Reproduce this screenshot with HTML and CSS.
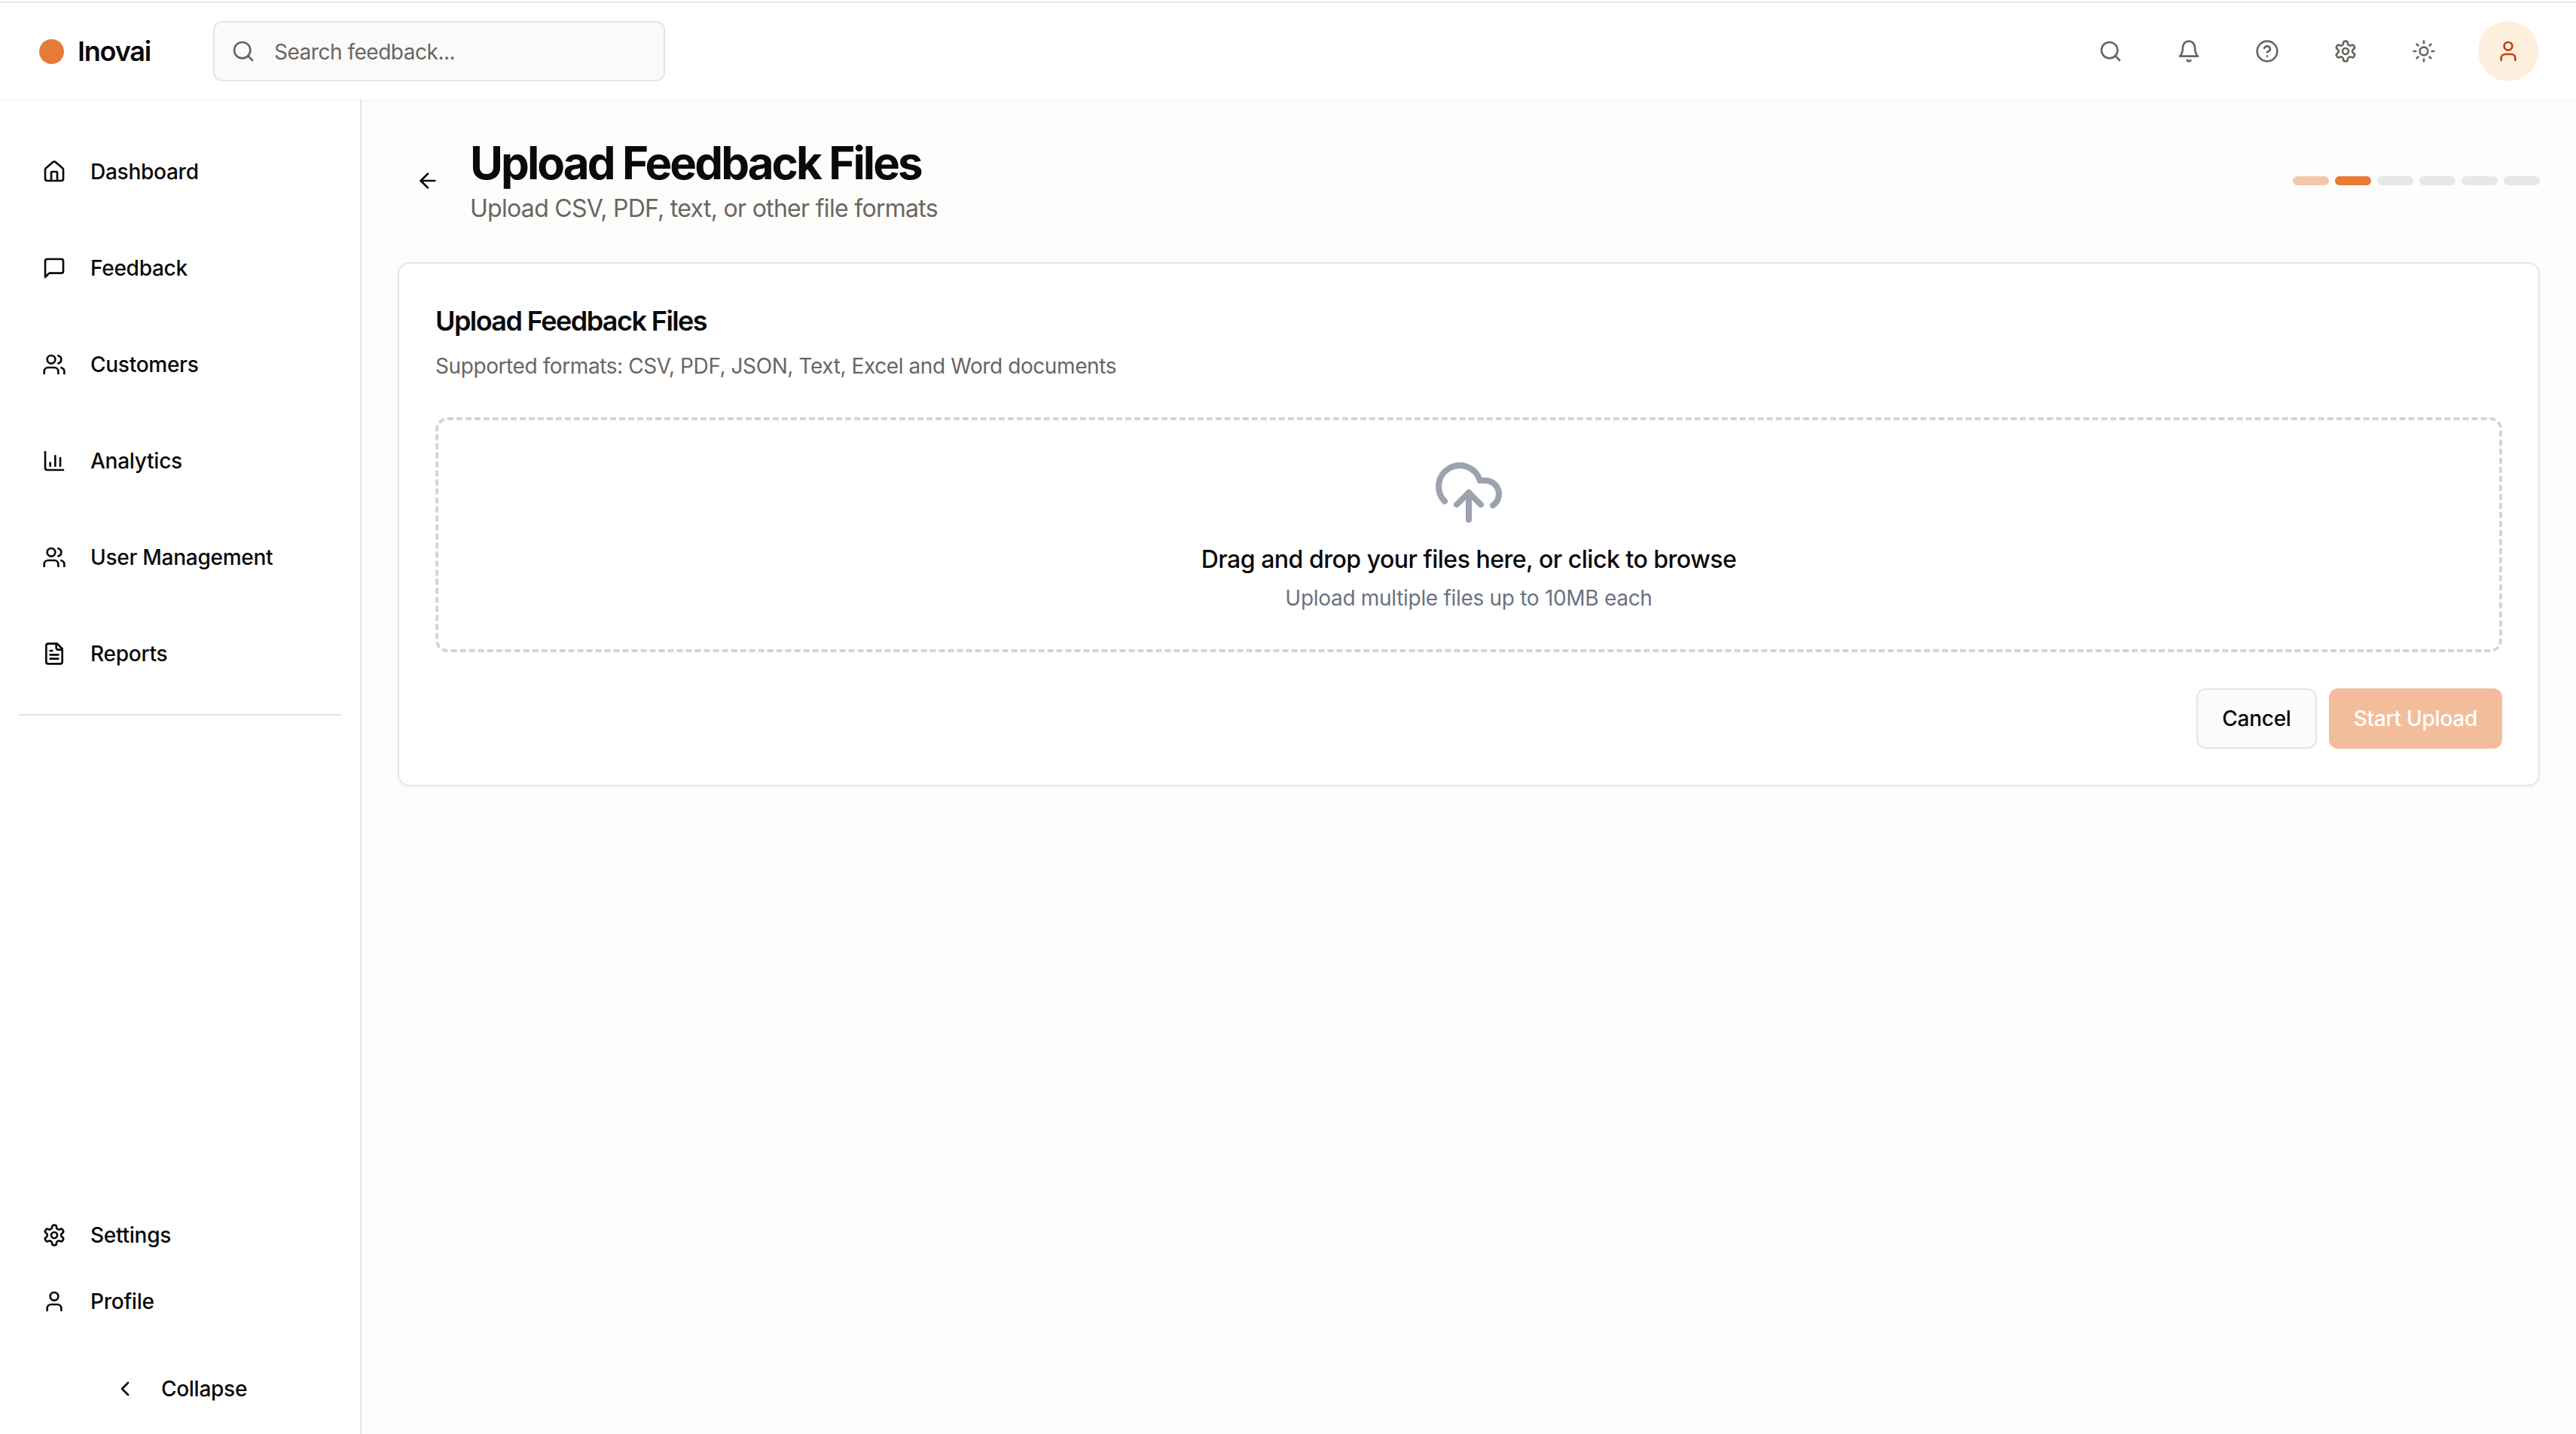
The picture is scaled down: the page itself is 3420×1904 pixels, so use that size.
FILE: index.html
```html
<!DOCTYPE html>
<html lang="en">
<head>
<meta charset="utf-8">
<title>Upload Feedback Files</title>
<link rel="stylesheet" href="styles.css">
</head>
<body>
<div class="app">
  <header class="topbar">
    <div class="brand"><span class="brand-dot"></span><span class="brand-name">Inovai</span></div>
    <div class="search">
      <svg class="icon" viewBox="0 0 24 24"><path d="m21 21-4.3-4.3"/><circle cx="11" cy="11" r="8"/></svg>
      <span class="search-text">Search feedback...</span>
    </div>
    <div class="top-actions">
      <span class="top-btn"><svg class="icon" viewBox="0 0 24 24"><path d="m21 21-4.3-4.3"/><circle cx="11" cy="11" r="8"/></svg></span>
      <span class="top-btn"><svg class="icon" viewBox="0 0 24 24"><path d="M6 8a6 6 0 0 1 12 0c0 7 3 9 3 9H3s3-2 3-9"/><path d="M10.3 21a1.94 1.94 0 0 0 3.4 0"/></svg></span>
      <span class="top-btn"><svg class="icon" viewBox="0 0 24 24"><circle cx="12" cy="12" r="10"/><path d="M9.09 9a3 3 0 0 1 5.83 1c0 2-3 3-3 3"/><path d="M12 17h.01"/></svg></span>
      <span class="top-btn"><svg class="icon" viewBox="0 0 24 24"><path d="M12.22 2h-.44a2 2 0 0 0-2 2v.18a2 2 0 0 1-1 1.73l-.43.25a2 2 0 0 1-2 0l-.15-.08a2 2 0 0 0-2.73.73l-.22.38a2 2 0 0 0 .73 2.73l.15.1a2 2 0 0 1 1 1.72v.51a2 2 0 0 1-1 1.74l-.15.09a2 2 0 0 0-.73 2.73l.22.38a2 2 0 0 0 2.73.73l.15-.08a2 2 0 0 1 2 0l.43.25a2 2 0 0 1 1 1.73V20a2 2 0 0 0 2 2h.44a2 2 0 0 0 2-2v-.18a2 2 0 0 1 1-1.73l.43-.25a2 2 0 0 1 2 0l.15.08a2 2 0 0 0 2.73-.73l.22-.39a2 2 0 0 0-.73-2.73l-.15-.08a2 2 0 0 1-1-1.74v-.5a2 2 0 0 1 1-1.74l.15-.09a2 2 0 0 0 .73-2.73l-.22-.38a2 2 0 0 0-2.73-.73l-.15.08a2 2 0 0 1-2 0l-.43-.25a2 2 0 0 1-1-1.73V4a2 2 0 0 0-2-2z"/><circle cx="12" cy="12" r="3"/></svg></span>
      <span class="top-btn"><svg class="icon" viewBox="0 0 24 24"><circle cx="12" cy="12" r="4"/><path d="M12 2v2"/><path d="M12 20v2"/><path d="m4.93 4.93 1.41 1.41"/><path d="m17.66 17.66 1.41 1.41"/><path d="M2 12h2"/><path d="M20 12h2"/><path d="m6.34 17.66-1.41 1.41"/><path d="m19.07 4.93-1.41 1.41"/></svg></span>
      <span class="avatar"><svg class="icon" viewBox="0 0 24 24"><path d="M19 21v-2a4 4 0 0 0-4-4H9a4 4 0 0 0-4 4v2"/><circle cx="12" cy="7" r="4"/></svg></span>
    </div>
  </header>
  <div class="body-row">
    <aside class="sidebar">
      <nav class="nav">
        <a class="nav-item"><svg class="icon" viewBox="0 0 24 24"><path d="M15 21v-8a1 1 0 0 0-1-1h-4a1 1 0 0 0-1 1v8"/><path d="M3 10a2 2 0 0 1 .709-1.528l7-5.999a2 2 0 0 1 2.582 0l7 5.999A2 2 0 0 1 21 10v9a2 2 0 0 1-2 2H5a2 2 0 0 1-2-2z"/></svg>Dashboard</a>
        <a class="nav-item"><svg class="icon" viewBox="0 0 24 24"><path d="M21 15a2 2 0 0 1-2 2H7l-4 4V5a2 2 0 0 1 2-2h14a2 2 0 0 1 2 2z"/></svg>Feedback</a>
        <a class="nav-item"><svg class="icon" viewBox="0 0 24 24"><path d="M16 21v-2a4 4 0 0 0-4-4H6a4 4 0 0 0-4 4v2"/><circle cx="9" cy="7" r="4"/><path d="M22 21v-2a4 4 0 0 0-3-3.87"/><path d="M16 3.13a4 4 0 0 1 0 7.75"/></svg>Customers</a>
        <a class="nav-item"><svg class="icon" viewBox="0 0 24 24"><path d="M3 3v16a2 2 0 0 0 2 2h16"/><path d="M8 17v-3"/><path d="M13 17V7"/><path d="M18 17V9"/></svg>Analytics</a>
        <a class="nav-item"><svg class="icon" viewBox="0 0 24 24"><path d="M16 21v-2a4 4 0 0 0-4-4H6a4 4 0 0 0-4 4v2"/><circle cx="9" cy="7" r="4"/><path d="M22 21v-2a4 4 0 0 0-3-3.87"/><path d="M16 3.13a4 4 0 0 1 0 7.75"/></svg>User Management</a>
        <a class="nav-item"><svg class="icon" viewBox="0 0 24 24"><path d="M15 2H6a2 2 0 0 0-2 2v16a2 2 0 0 0 2 2h12a2 2 0 0 0 2-2V7Z"/><path d="M14 2v4a2 2 0 0 0 2 2h4"/><path d="M10 9H8"/><path d="M16 13H8"/><path d="M16 17H8"/></svg>Reports</a>
      </nav>
      <div class="side-rule"></div>
      <div class="side-bottom">
        <a class="nav-item"><svg class="icon" viewBox="0 0 24 24"><path d="M12.22 2h-.44a2 2 0 0 0-2 2v.18a2 2 0 0 1-1 1.73l-.43.25a2 2 0 0 1-2 0l-.15-.08a2 2 0 0 0-2.73.73l-.22.38a2 2 0 0 0 .73 2.73l.15.1a2 2 0 0 1 1 1.72v.51a2 2 0 0 1-1 1.74l-.15.09a2 2 0 0 0-.73 2.73l.22.38a2 2 0 0 0 2.73.73l.15-.08a2 2 0 0 1 2 0l.43.25a2 2 0 0 1 1 1.73V20a2 2 0 0 0 2 2h.44a2 2 0 0 0 2-2v-.18a2 2 0 0 1 1-1.73l.43-.25a2 2 0 0 1 2 0l.15.08a2 2 0 0 0 2.73-.73l.22-.39a2 2 0 0 0-.73-2.73l-.15-.08a2 2 0 0 1-1-1.74v-.5a2 2 0 0 1 1-1.74l.15-.09a2 2 0 0 0 .73-2.73l-.22-.38a2 2 0 0 0-2.73-.73l-.15.08a2 2 0 0 1-2 0l-.43-.25a2 2 0 0 1-1-1.73V4a2 2 0 0 0-2-2z"/><circle cx="12" cy="12" r="3"/></svg>Settings</a>
        <a class="nav-item"><svg class="icon" viewBox="0 0 24 24"><path d="M19 21v-2a4 4 0 0 0-4-4H9a4 4 0 0 0-4 4v2"/><circle cx="12" cy="7" r="4"/></svg>Profile</a>
        <a class="nav-item collapse"><svg class="icon" viewBox="0 0 24 24"><path d="m15 18-6-6 6-6"/></svg>Collapse</a>
      </div>
    </aside>
    <main class="main">
      <div class="page-head">
        <span class="back"><svg class="icon" viewBox="0 0 24 24"><path d="m12 19-7-7 7-7"/><path d="M19 12H5"/></svg></span>
        <div class="page-titles">
          <h1 class="page-title">Upload Feedback Files</h1>
          <p class="page-sub">Upload CSV, PDF, text, or other file formats</p>
        </div>
        <div class="steps">
          <span class="step step-done"></span>
          <span class="step step-current"></span>
          <span class="step"></span>
          <span class="step"></span>
          <span class="step"></span>
          <span class="step"></span>
        </div>
      </div>
      <section class="card">
        <h2 class="card-title">Upload Feedback Files</h2>
        <p class="card-sub">Supported formats: CSV, PDF, JSON, Text, Excel and Word documents</p>
        <div class="dropzone">
          <svg class="cloud" viewBox="0 0 24 24"><path d="M4 14.899A7 7 0 1 1 15.71 8h1.79a4.5 4.5 0 0 1 2.5 8.242"/><path d="M12 12v9"/><path d="m16 16-4-4-4 4"/></svg>
          <p class="drop-title">Drag and drop your files here, or click to browse</p>
          <p class="drop-sub">Upload multiple files up to 10MB each</p>
        </div>
        <div class="actions">
          <button class="btn btn-cancel">Cancel</button>
          <button class="btn btn-start">Start Upload</button>
        </div>
      </section>
    </main>
  </div>
</div>
</body>
</html>
```
FILE: styles.css
```css
* { box-sizing: border-box; }
html, body { margin: 0; padding: 0; height: 100%; }
body {
  font-family: Inter, "Liberation Sans", sans-serif;
  color: #0a0a0a;
  background: #fff;
  overflow: hidden;
}
.app {
  height: 1904px;
  display: flex;
  flex-direction: column;
  padding-top: 2px;
}
.icon {
  width: 32px;
  height: 32px;
  flex: none;
  fill: none;
  stroke: currentColor;
  stroke-width: 2;
  stroke-linecap: round;
  stroke-linejoin: round;
}
.topbar {
  position: relative;
  z-index: 2;
  flex: none;
  height: 130px;
  border-top: 2px solid #e6e5ee;
  background: #fff;
  box-shadow: 0 2px 4px rgba(0, 0, 0, 0.04);
  display: flex;
  align-items: center;
  padding: 0 50px 0 52px;
}
.brand { display: flex; align-items: center; gap: 18px; width: 231px; flex: none; }
.brand-dot { width: 33px; height: 33px; border-radius: 50%; background: #e97b37; }
.brand-name { font-size: 36px; font-weight: 600; letter-spacing: -1.2px; line-height: 56px; }
.search {
  width: 600px;
  height: 80px;
  border: 2px solid #e5e5e5;
  border-radius: 12px;
  background: #fafafa;
  display: flex;
  align-items: center;
  gap: 25px;
  padding: 0 0 0 22px;
  color: #6b6560;
}
.search-text { font-size: 28px; letter-spacing: -0.48px; line-height: 38px; height: 36px; }
.top-actions { margin-left: auto; display: flex; align-items: center; gap: 24px; color: #6b6560; }
.top-btn { width: 80px; height: 80px; display: flex; align-items: center; justify-content: center; }
.avatar {
  width: 80px;
  height: 80px;
  margin-left: 8px;
  border-radius: 50%;
  background: #fdefdd;
  color: #c2410c;
  display: flex;
  align-items: center;
  justify-content: center;
}
.body-row { flex: 1; display: flex; min-height: 0; }
.sidebar {
  width: 480px;
  flex: none;
  border-right: 2px solid #e5e5e5;
  background: #fff;
  padding: 52px 24px 16px;
  display: flex;
  flex-direction: column;
}
.nav { display: flex; flex-direction: column; gap: 40px; }
.nav-item {
  height: 88px;
  display: flex;
  align-items: center;
  gap: 32px;
  padding: 0 32px;
  font-size: 28px;
  line-height: 34px;
  font-weight: 500;
  letter-spacing: -0.26px;
  color: #0a0a0a;
}
.side-rule { height: 2px; background: #e5e5e5; margin-top: 36px; flex: none; }
.side-bottom { margin-top: auto; display: flex; flex-direction: column; }
.collapse { justify-content: center; margin-top: 28px; }
.main {
  flex: 1;
  min-width: 0;
  background: #fdfdfc;
  padding: 48px;
}
.page-head { display: flex; align-items: center; gap: 16px; margin-bottom: 48px; }
.back { width: 80px; height: 80px; display: flex; align-items: center; justify-content: center; color: #0a0a0a; flex: none; }
.page-titles { flex: 1; min-width: 0; }
.page-title { margin: 0; font-size: 60px; line-height: 72px; font-weight: 700; letter-spacing: -2.9px; color: #0a0a0a; }
.page-sub { margin: 0; font-size: 32px; line-height: 50px; height: 48px; letter-spacing: -0.7px; color: #6b6560; }
.steps { display: flex; gap: 8px; flex: none; }
.step { width: 48px; height: 12px; border-radius: 6px; background: #e5e7eb; }
.step-done { background: #f5c6ac; }
.step-current { background: #e97a35; }
.card {
  background: #fff;
  border: 2px solid #e5e7eb;
  border-radius: 16px;
  box-shadow: 0 2px 4px rgba(0, 0, 0, 0.05);
  padding: 48px;
}
.card-title { margin: 0; font-size: 36px; line-height: 56px; font-weight: 600; letter-spacing: -1.57px; }
.card-sub { margin: 12px 0 48px; font-size: 28px; line-height: 40px; letter-spacing: -0.41px; color: #6b6560; }
.dropzone {
  border: 4px dashed #d1d5db;
  border-radius: 16px;
  padding: 48px;
  display: flex;
  flex-direction: column;
  align-items: center;
}
.cloud {
  width: 96px;
  height: 96px;
  fill: none;
  stroke: #9ca3af;
  stroke-width: 2;
  stroke-linecap: round;
  stroke-linejoin: round;
}
.drop-title { margin: 16px 0 0; font-size: 32px; line-height: 50px; height: 48px; font-weight: 500; letter-spacing: -0.49px; }
.drop-sub { margin: 8px 0 0; font-size: 28px; line-height: 40px; letter-spacing: -0.3px; color: #6b7280; }
.actions { display: flex; justify-content: flex-end; gap: 16px; margin-top: 48px; }
.btn {
  height: 80px;
  border-radius: 12px;
  font-family: inherit;
  font-size: 28px;
  font-weight: 500;
  letter-spacing: -0.26px;
  padding: 0 32px;
}
.btn-cancel { border: 2px solid #e5e5e5; background: #fbfbfb; color: #0a0a0a; }
.btn-start { border: 0; background: #f3bd9c; color: #fff; padding: 0 33px; }
```
